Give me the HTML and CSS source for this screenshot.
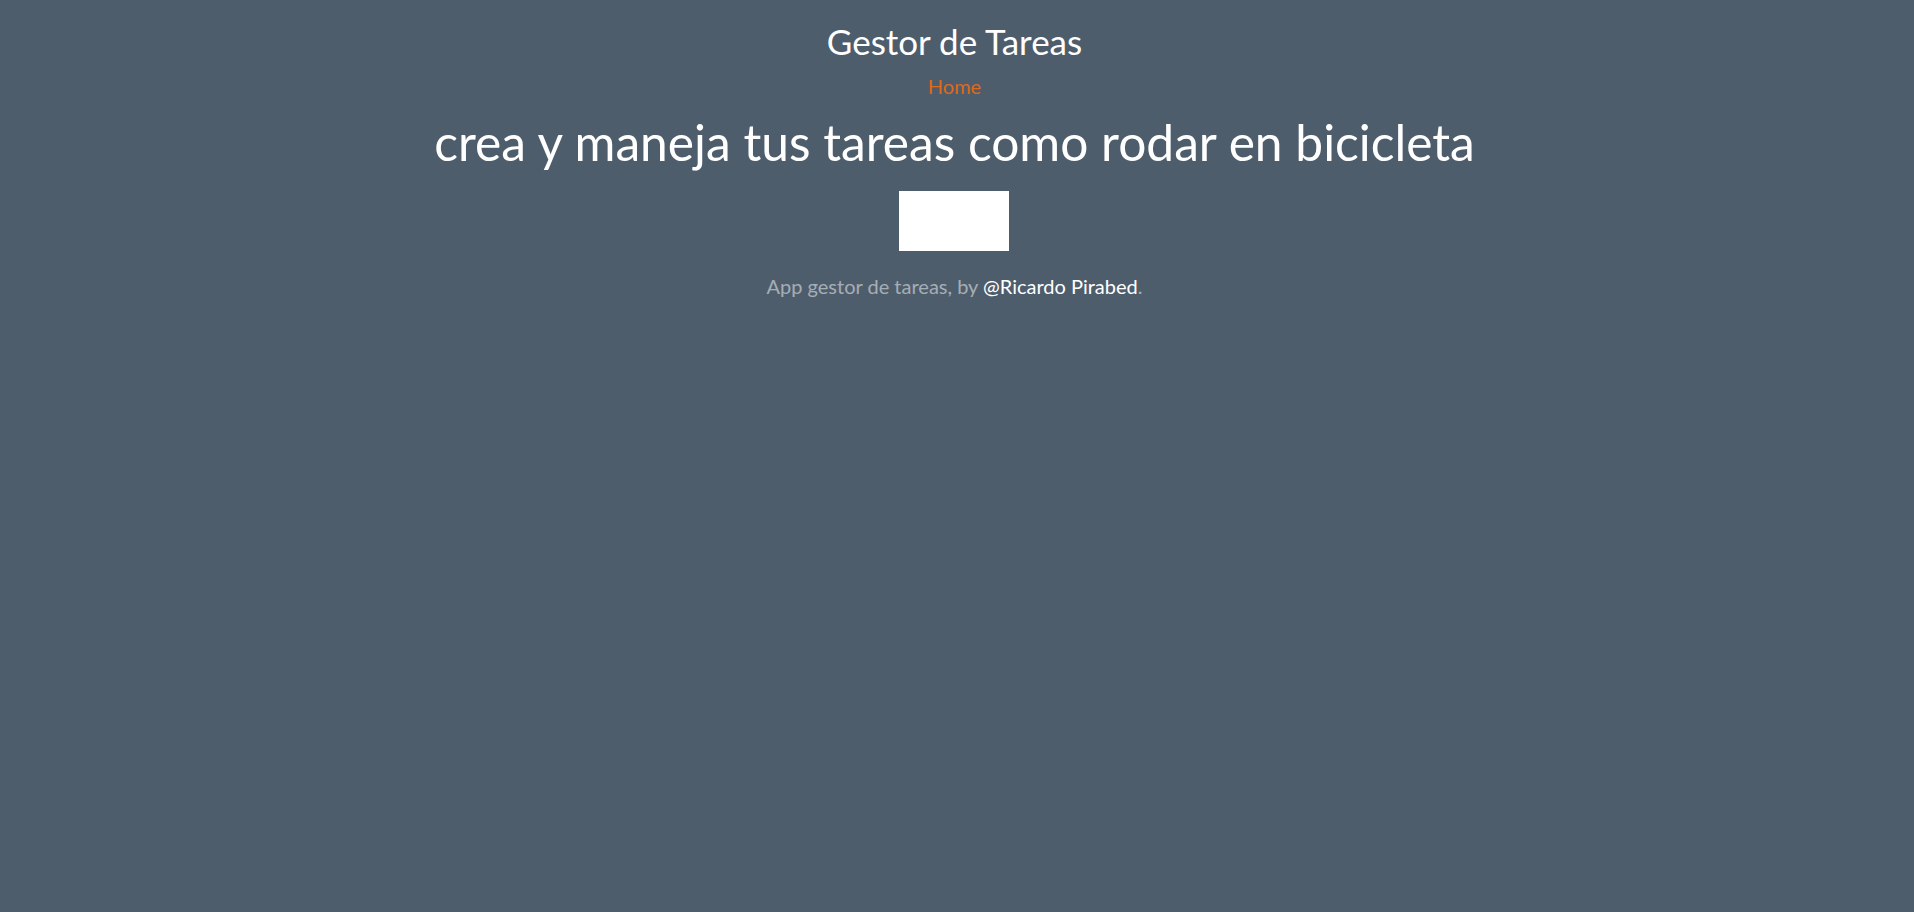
FILE: index.html
```html
<!DOCTYPE html>
<html lang="es">
<head>
<meta charset="utf-8">
<title>Gestor de Tareas</title>
<link rel="stylesheet" href="styles.css">
</head>
<body>
<div class="cover">
  <header class="masthead">
    <h3 class="brand">Gestor de Tareas</h3>
    <nav class="nav">
      <a class="nav-link active" href="#">Home</a>
    </nav>
  </header>
  <main class="inner">
    <h1 class="cover-heading">crea y maneja tus tareas como rodar en bicicleta</h1>
    <div class="picture"></div>
  </main>
  <footer class="mastfoot">
    <p>App gestor de tareas, by <a href="#">@Ricardo Pirabed</a>.</p>
  </footer>
</div>
</body>
</html>
```

FILE: styles.css
```css
html, body {
  margin: 0;
  padding: 0;
  height: 100%;
}
body {
  background: #4e5d6c;
  color: #ffffff;
  font-family: Lato, "Noto Sans", sans-serif;
  font-size: 15px;
}
.cover {
  display: flex;
  flex-direction: column;
  align-items: center;
  text-align: center;
  padding-right: 5px;
}
.masthead {
  display: flex;
  flex-direction: column;
  align-items: center;
}
.brand {
  margin: 20px 0 0;
  font-size: 35px;
  font-weight: 400;
  line-height: 42px;
}
.nav {
  margin-top: 9px;
  line-height: 30px;
}
.nav-link {
  color: #df691a;
  text-decoration: none;
  font-size: 20px;
}
.inner {
  display: flex;
  flex-direction: column;
  align-items: center;
}
.cover-heading {
  margin: 9px 0 0;
  font-size: 49.7px;
  font-weight: 400;
  line-height: 60px;
}
.picture {
  margin-top: 19px;
  width: 110px;
  height: 60px;
  background: #ffffff;
}
.mastfoot p {
  margin: 20px 0 0;
  color: rgba(255, 255, 255, 0.5);
  font-size: 20px;
  line-height: 30px;
}
.mastfoot a {
  color: #ffffff;
  text-decoration: none;
}
```
